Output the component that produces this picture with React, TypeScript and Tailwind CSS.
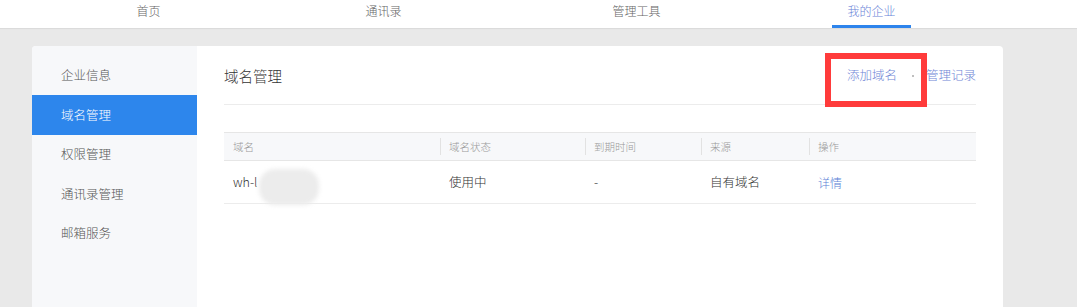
import React from "react";

const font = { fontFamily: '"Noto Sans CJK SC", "Microsoft YaHei", sans-serif' };

export default function App() {
  const navs = [
    { t: "首页", ml: "ml-[109px]" },
    { t: "通讯录", ml: "ml-[156px]" },
    { t: "管理工具", ml: "ml-[174px]" },
    { t: "我的企业", ml: "ml-[156px]", active: true },
  ];
  const side = [
    { t: "企业信息", h: "h-[39px]" },
    { t: "域名管理", h: "h-[40px]" },
    { t: "权限管理", h: "h-[39.5px]" },
    { t: "通讯录管理", h: "h-[39.5px]" },
    { t: "邮箱服务", h: "h-[39.5px]" },
  ];
  return (
    <div className="w-[1077px] h-[307px] bg-[#e9e9e9] overflow-hidden font-light" style={font}>
      <div className="h-[28px] bg-white flex shadow-[0_1px_1px_rgba(0,0,0,0.06)] relative z-10">
        {navs.map((n) => (
          <div
            key={n.t}
            className={`${n.ml} w-[79px] h-[28px] flex items-center justify-center text-[12px] pb-[7px] relative ${
              n.active ? "text-[#6a83d8]" : "text-[#666]"
            }`}
          >
            {n.t}
            {n.active && <div className="absolute left-0 right-0 bottom-0 h-[3px] bg-[#2d84ec]" />}
          </div>
        ))}
      </div>
      <div className="pt-[18px] pl-[32px]">
        <div className="w-[971px] h-[261px] bg-white rounded-t-[4px] flex overflow-hidden">
          <div className="w-[165px] bg-[#f7f8fa] pt-[10px]">
            {side.map((s, i) => (
              <div
                key={s.t}
                className={`${s.h} ${i === 1 ? "bg-[#2d86ec] text-white" : "text-[#555]"} flex items-center pl-[29px] text-[12.5px]`}
              >
                {s.t}
              </div>
            ))}
          </div>
          <div className="flex-1 px-[27px]">
            <div className="h-[59px] flex items-center justify-between border-b border-[#ececec] relative">
              <div className="text-[14.5px] text-[#333] pt-[1px]">域名管理</div>
              <div className="flex items-center text-[12.5px] text-[#6f86d6] pt-[1px]">
                <span>添加域名</span>
                <span className="ml-[15px] mr-[12px] w-[2px] h-[2px] rounded-full bg-[#aaa]" />
                <span>管理记录</span>
              </div>
              <div className="absolute left-[601px] top-[7px] w-[102px] h-[54px] border-[6px] border-[#ff3b3b]" />
            </div>
            <div className="mt-[27px]">
              <div className="flex h-[29px] bg-[#f7f8fa] border-t border-b border-[#e6e6e6] text-[10.5px] text-[#999]">
                {[
                  { t: "域名", w: "w-[216px]" },
                  { t: "域名状态", w: "w-[145px]" },
                  { t: "到期时间", w: "w-[116px]" },
                  { t: "来源", w: "w-[108px]" },
                  { t: "操作", w: "flex-1" },
                ].map((c, i) => (
                  <div key={c.t} className={`${c.w} flex items-center relative pl-[9px]`}>
                    {i > 0 && <div className="absolute left-0 top-[5px] h-[17px] w-px bg-[#e2e2e2]" />}
                    {c.t}
                  </div>
                ))}
              </div>
              <div className="flex h-[43px] border-b border-[#ececec] text-[12.5px] text-[#333]">
                <div className="w-[216px] flex items-center pl-[9px]">
                  <span>wh-l</span>
                  <span className="ml-[2px] mt-[10px] w-[60px] h-[36px] rounded-[16px] bg-[#ececec] blur-[2px]" />
                </div>
                <div className="w-[145px] flex items-center pl-[9px]">使用中</div>
                <div className="w-[116px] flex items-center pl-[9px]">-</div>
                <div className="w-[108px] flex items-center pl-[9px]">自有域名</div>
                <div className="flex-1 flex items-center pl-[9px] text-[12px] text-[#5b7fd6] pt-[2px]">详情</div>
              </div>
            </div>
          </div>
        </div>
      </div>
    </div>
  );
}
